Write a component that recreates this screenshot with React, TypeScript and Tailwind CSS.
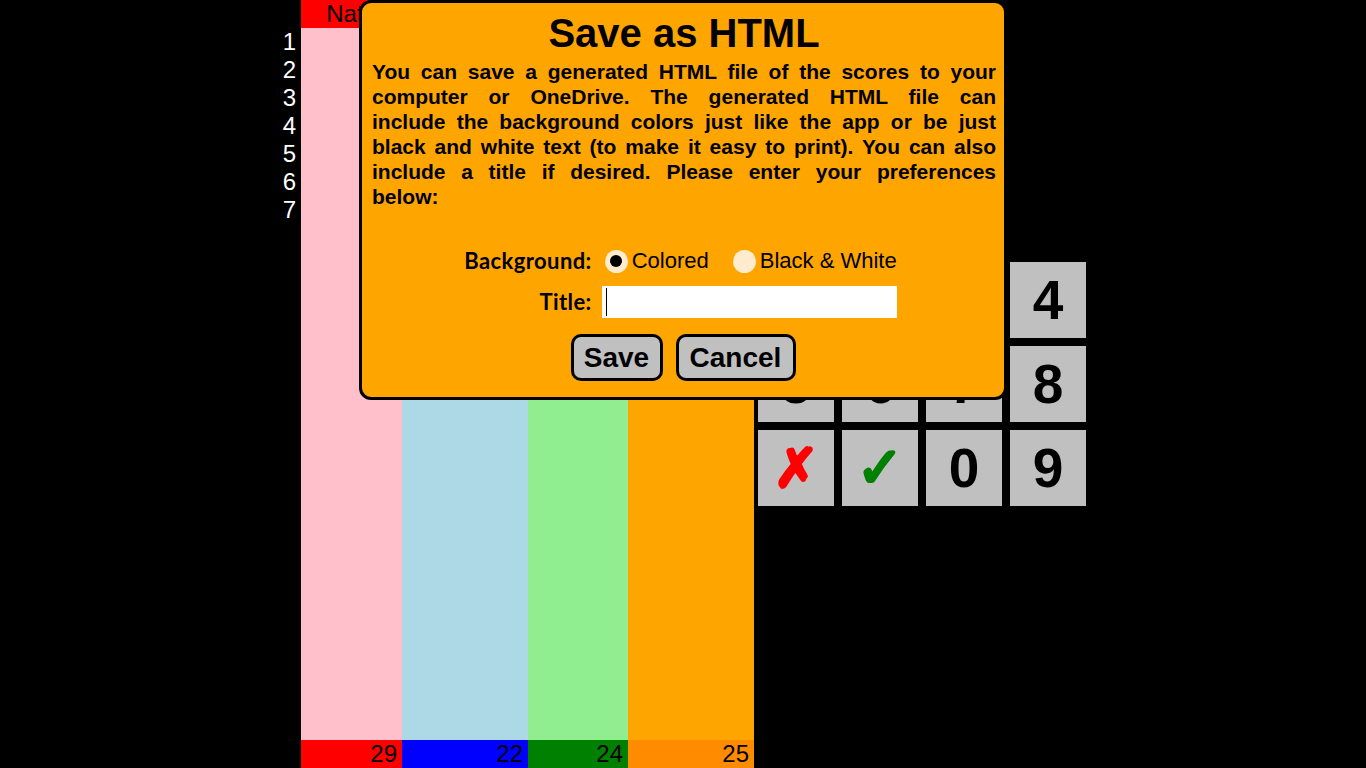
const columns = [
  { name: "Nate", body: "bg-[#FFC0CB]", head: "bg-[#FF0000]", foot: "bg-[#FF0000]", w: "w-[101px]", score: 29 },
  { name: "", body: "bg-[#ADD8E6]", head: "bg-[#0000FF]", foot: "bg-[#0000FF]", w: "w-[126px]", score: 22 },
  { name: "", body: "bg-[#90EE90]", head: "bg-[#008000]", foot: "bg-[#008000]", w: "w-[100px]", score: 24 },
  { name: "", body: "bg-[#FFA500]", head: "bg-[#FF8C00]", foot: "bg-[#FF8C00]", w: "w-[126px]", score: 25 },
];

const keys = ["1", "2", "3", "4", "5", "6", "7", "8", "✗", "✓", "0", "9"];

const lines = [
  "You can save a generated HTML file of the scores to your",
  "computer or OneDrive. The generated HTML file can",
  "include the background colors just like the app or be just",
  "black and white text (to make it easy to print). You can also",
  "include a title if desired. Please enter your preferences",
];

function Keypad() {
  return (
    <div className="ml-[4px] mt-[262px] grid grid-cols-[76px_76px_76px_76px] auto-rows-[76px] gap-[8px] self-start">
      {keys.map((k) => (
        <div
          key={k}
          className={
            k === "✗"
              ? "flex items-center justify-center bg-[#C0C0C0] text-[#FF0000] text-[54px] font-bold font-['DejaVu_Sans',sans-serif] [-webkit-text-stroke-width:3px]"
              : k === "✓"
              ? "flex items-center justify-center bg-[#C0C0C0] text-[#008000] text-[56px] font-bold font-['DejaVu_Sans',sans-serif] [-webkit-text-stroke-width:3px]"
              : "flex items-center justify-center bg-[#C0C0C0] text-black text-[55px] font-bold"
          }
        >
          {k}
        </div>
      ))}
    </div>
  );
}

function Radio({ checked, label }: { checked: boolean; label: string }) {
  return (
    <div className="flex items-center gap-[4px]">
      <div className="w-[23px] h-[23px] rounded-full bg-[#FFEBCD] flex items-center justify-center">
        {checked && <div className="w-[12px] h-[12px] rounded-full bg-black" />}
      </div>
      <span className="text-[22px] leading-[28px]">{label}</span>
    </div>
  );
}

function SaveDialog() {
  return (
    <div className="absolute left-[359px] top-0 w-[648px] h-[400px] rounded-[12px] border-[3px] border-black bg-[#FFA500] pl-[10px] pr-[8px]">
      <h1 className="pt-[7px] text-center text-[40px] leading-[46px] font-bold">Save as HTML</h1>
      <div className="mt-[3px] text-[21px] leading-[25px] font-bold">
        {lines.map((l) => (
          <div key={l} className="text-justify [text-align-last:justify]">
            {l}
          </div>
        ))}
        <div>below:</div>
      </div>
      <div className="mt-[38px] flex justify-center pr-[7px]">
        <div className="grid grid-cols-[auto_auto] gap-x-[10px] gap-y-[11px] items-center">
          <span className="text-right text-[22px] tracking-[0.4px] font-bold font-['Lato',sans-serif] leading-[28px]">
            Background:
          </span>
          <div className="flex items-center gap-[24px] pl-[3px]">
            <Radio checked label="Colored" />
            <Radio checked={false} label="Black & White" />
          </div>
          <span className="text-right text-[22px] tracking-[0.4px] font-bold font-['Lato',sans-serif] leading-[32px]">
            Title:
          </span>
          <div className="w-[295px] h-[32px] bg-white flex items-center pl-[4px]">
            <div className="w-[1px] h-[28px] bg-black" />
          </div>
        </div>
      </div>
      <div className="mt-[16px] flex justify-center gap-[13px] pr-[2px]">
        <button className="w-[92px] h-[47px] rounded-[10px] border-[3px] border-black bg-[#C0C0C0] text-[28px] font-bold">
          Save
        </button>
        <button className="w-[120px] h-[47px] rounded-[10px] border-[3px] border-black bg-[#C0C0C0] text-[28px] font-bold">
          Cancel
        </button>
      </div>
    </div>
  );
}

export default function App() {
  return (
    <div className="relative w-[1366px] h-[768px] bg-black overflow-hidden font-['Liberation_Sans',Arial,sans-serif] text-black">
      <div className="flex h-full pl-[270px]">
        <div className="w-[31px] flex flex-col pt-[28px] pr-[5px] text-white text-[24px] leading-[28px] text-right">
          {[1, 2, 3, 4, 5, 6, 7].map((n) => (
            <div key={n}>{n}</div>
          ))}
        </div>
        {columns.map((c, i) => (
          <div key={i} className={`${c.w} flex flex-col h-full`}>
            <div className={`${c.head} h-[28px] text-center text-[24px] leading-[28px]`}>{c.name}</div>
            <div className={`${c.body} flex-1`} />
            <div className={`${c.foot} h-[28px] text-right pr-[5px] text-[24px] leading-[28px]`}>{c.score}</div>
          </div>
        ))}
        <Keypad />
      </div>
      <SaveDialog />
    </div>
  );
}
